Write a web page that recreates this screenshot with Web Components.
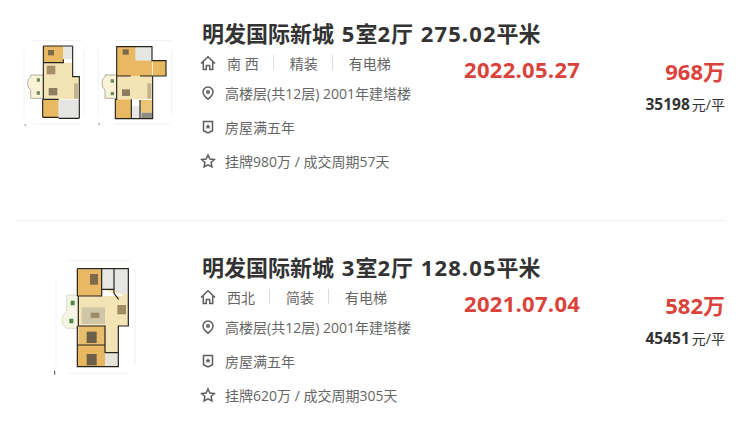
<!DOCTYPE html>
<html lang="zh">
<head>
<meta charset="utf-8">
<title>成交记录</title>
<style>
  html, body { margin: 0; background: #fff; }
  body { font-family: "Open Sans", "Noto Sans CJK SC", sans-serif; overflow: hidden; height: 443px; }
  .n { letter-spacing: 1.1px; }
</style>
</head>
<body>
<template id="row-tpl">
  <style>
    :host { display: flex; align-items: center; height: 34px; font-size: 14px; color: #666; }
    :host([icon="house"]) { height: 27px; }
    .icon { width: 16px; height: 16px; margin: 0 9px 0 -2px; flex: none; display: flex; }
    svg { width: 16px; height: 16px; fill: none; stroke: #5c5c5c; stroke-width: 1.5; }
  </style>
  <span class="icon"><svg viewBox="0 0 16 16"></svg></span>
  <slot></slot>
</template>

<template id="deal-tpl">
  <style>
    :host {
      display: grid;
      grid-template-columns: 187px 262px 145px 1fr;
      grid-template-rows: 34px auto;
      height: 221px;
      box-sizing: border-box;
      margin: 0 18px 13px 15px;
      padding-top: 16px;
      border-bottom: 1px solid #eee;
      color: #333;
    }
    :host(:last-of-type) { border-bottom: 0; height: 209px; margin-bottom: 0; }
    .plan { grid-row: 1 / 3; margin-left: -15px; }
    h2 { grid-column: 2 / 5; margin: 0; font-size: 22px; line-height: 34px; font-weight: 700; color: #333; white-space: nowrap; word-spacing: 2px; }
    .info { margin-top: -1px; }
    .date { margin-top: 4px; font-size: 22px; line-height: 30px; font-weight: 700; color: #d9433b; letter-spacing: .3px; white-space: nowrap; }
    .price { margin-top: 6px; text-align: right; }
    .total { font-size: 22px; line-height: 30px; font-weight: 700; color: #d9433b; }
    .unit { font-size: 14px; line-height: 20px; margin-top: 8px; color: #333; white-space: nowrap; }
  </style>
  <div class="plan"><slot name="plan"></slot></div>
  <h2><slot name="title"></slot></h2>
  <div class="info"><slot name="rows"></slot></div>
  <div class="date"><slot name="date"></slot></div>
  <div class="price">
    <div class="total"><slot name="total"></slot></div>
    <div class="unit"><slot name="unit"></slot></div>
  </div>
</template>

<template id="tags-tpl">
  <style>
    :host { display: flex; align-items: center; padding-left: 2px; }
    ::slotted(span) { display: flex; align-items: center; }
    ::slotted(span:not(:last-child))::after { content: ""; width: 1px; height: 15px; background: #ddd; margin: 0 16px 0 14px; }
  </style>
  <slot></slot>
</template>

<template id="num-tpl">
  <style>
    :host { font-size: 15.500px; font-weight: 700; margin-right: -2px; }
  </style>
  <slot></slot>
</template>

<deal-item>
  <svg slot="plan" width="190" height="120" viewBox="0 0 570 360" style="display:block;margin-top:4px">
    <defs><filter id="soft"><feGaussianBlur stdDeviation="2"/></filter></defs>
    <g filter="url(#soft)">
      <g stroke="#dfe3e8" stroke-width="1.5" fill="none">
        <path d="M100 62H245M72 90V290M252 90V290M100 312H245"/>
        <path d="M345 62H515M295 90V290M515 90V290M345 312H510"/>
      </g>
      <path d="M92 170a26 26 0 0 0 0 40v25h38v-70h-38z" fill="#fbf3d8" stroke="#8a8a7a" stroke-width="2"/>
      <path d="M130 128h88v42h20v68h-108z" fill="#f3e4b6"/>
      <path d="M130 78h60v50h-60z" fill="#e8b862"/>
      <path d="M190 78h28v40h-28z" fill="#e6e6e4"/>
      <path d="M128 238h48v54h-48z" fill="#e8b862"/>
      <path d="M176 240h62v54h-62z" fill="#e4e4e2"/>
      <path d="M144 90h18v16h-18z" fill="#7b6a4a"/>
      <path d="M140 137h26v26h-26z" fill="#a48f68"/>
      <path d="M146 204h26v22h-26z" fill="#8f7d5d"/>
      <path d="M222 190h12v46h-12z" fill="#c2b48e"/>
      <path d="M110 175h10v10h-10zM110 214h10v10h-10z" fill="#6f8f5a"/>
      <path d="M130 78h60M190 78h28M218 78v92h20v125M238 295h-62M128 292h48M128 292v-54M130 238v-110M130 128v-50M130 128h60l0-10M176 238h-46" fill="none" stroke="#26241f" stroke-width="3.4"/>

      <path d="M315 170a26 26 0 0 0 0 40v25h35v-70h-35z" fill="#fbf3d8" stroke="#8a8a7a" stroke-width="2"/>
      <path d="M350 168h108v70h-108z" fill="#f3e4b6"/>
      <path d="M350 80h106v88h-106z" fill="#e8b862"/>
      <path d="M406 80h50v42h-50z" fill="#e6e6e4"/>
      <path d="M458 122h40v46h-40z" fill="#e8b862"/>
      <path d="M346 238h48v58h-48z" fill="#e8b862"/>
      <path d="M394 258h26v38h-26z" fill="#e8e8e6"/>
      <path d="M420 240h38v38h-38z" fill="#ebc67a"/>
      <path d="M424 278h34v18h-34z" fill="#8d8a80"/>
      <path d="M368 88h18v16h-18z" fill="#7b6a4a"/>
      <path d="M366 208h24v20h-24z" fill="#8f7d5d"/>
      <path d="M442 190h12v46h-12z" fill="#c2b48e"/>
      <path d="M332 178h10v10h-10zM332 216h10v10h-10z" fill="#6f8f5a"/>
      <path d="M350 80h106v42h42v46h-40v128h-112v-58h4v-70zM350 168h42M420 168h38M394 238v58M420 240v56" fill="none" stroke="#26241f" stroke-width="3.4"/>
      <path d="M74 312l4 6M297 308v8" stroke="#555" stroke-width="2"/>
    </g>
  </svg>
  <span slot="title">明发国际新城 <span class="n">5</span>室<span class="n">2</span>厅 <span class="n">275.02</span>平米</span>
  <div slot="rows">
    <deal-row icon="house"><deal-tags><span>南 西</span><span>精装</span><span>有电梯</span></deal-tags></deal-row>
    <deal-row icon="pin">高楼层(共12层) 2001年建塔楼</deal-row>
    <deal-row icon="shield">房屋满五年</deal-row>
    <deal-row icon="star">挂牌980万 / 成交周期57天</deal-row>
  </div>
  <span slot="date">2022.05.27</span>
  <span slot="total">968万</span>
  <span slot="unit"><deal-num>35198</deal-num>元/平</span>
</deal-item>

<deal-item>
  <svg slot="plan" width="187" height="135" viewBox="0 0 561 405" style="display:block">
    <defs><filter id="soft2"><feGaussianBlur stdDeviation="1.800"/></filter></defs>
    <g transform="translate(120 0)" filter="url(#soft2)">
      <g stroke="#dfe3e8" stroke-width="1.5" fill="none">
        <path d="M85 32H270M48 95V345M285 55V345M85 370H270"/>
      </g>
      <path d="M80 135h35v100h-35c-10-8-14-16-14-26s8-18 14-24z" fill="#f4f5e2" stroke="#b8b8a8" stroke-width="1.5"/>
      <path d="M115 138h150v90h-30v80h-40v-80h-80z" fill="#f3e4b6"/>
      <path d="M185 58h37v60h-37z" fill="#e8e8e6"/>
      <path d="M222 58h43v72h-43z" fill="#e6e6e4"/>
      <path d="M185 118h37l43 30v-18h-43z" fill="#f3e4b6"/>
      <path d="M112 58h73v80h-73z" fill="#e8b862"/>
      <path d="M115 228h80v57h-80z" fill="#e8bd6c"/>
      <path d="M112 285h83v65h-83z" fill="#e8b862"/>
      <path d="M195 308h40v42h-40z" fill="#e6e4da"/>
      <path d="M150 72h24v32h-24z" fill="#7b6a4a"/>
      <path d="M125 172h70v50h-70z" fill="#cfc6a8"/>
      <path d="M152 188h26v16h-26z" fill="#9c8b66"/>
      <path d="M232 165h26v28h-26z" fill="#a08c62"/>
      <path d="M140 245h30v34h-30z" fill="#6d5f49"/>
      <path d="M140 312h30v34h-30z" fill="#6d5f49"/>
      <path d="M92 152h12v14h-12zM88 206h12v14h-12z" fill="#4d8a45"/>
      <path d="M112 56h153v172h-30v122h-123v-122M112 56v82M112 138h73v-80M115 138v90M115 228h80v80M112 285h83M195 308h40M222 58v72l14 18M185 118h37" fill="none" stroke="#26241f" stroke-width="3.6"/>
      <path d="M44 362v12" stroke="#444" stroke-width="3"/>
    </g>
  </svg>
  <span slot="title">明发国际新城 <span class="n">3</span>室<span class="n">2</span>厅 <span class="n">128.05</span>平米</span>
  <div slot="rows">
    <deal-row icon="house"><deal-tags><span>西北</span><span>简装</span><span>有电梯</span></deal-tags></deal-row>
    <deal-row icon="pin">高楼层(共12层) 2001年建塔楼</deal-row>
    <deal-row icon="shield">房屋满五年</deal-row>
    <deal-row icon="star">挂牌620万 / 成交周期305天</deal-row>
  </div>
  <span slot="date">2021.07.04</span>
  <span slot="total">582万</span>
  <span slot="unit"><deal-num>45451</deal-num>元/平</span>
</deal-item>

<script>
const ICONS = {
  house: '<path d="M1 8.500 8 1.800l7 6.700M3.300 7V14.500h3v-4h3.400v4h3V7"/>',
  pin: '<path d="M8 2a5 5 0 0 1 5 5c0 3.200-3 5.500-5 7.200C6 12.500 3 10.200 3 7a5 5 0 0 1 5-5z"/><circle cx="8" cy="7" r="1.300"/>',
  shield: '<path d="M3.500 2.500h9v9.200L8 14l-4.500-2.300z"/><path d="m8 5 .8 1.700 1.800.2-1.300 1.200.4 1.800L8 9l-1.700.9.400-1.800L5.400 6.900l1.800-.2z" fill="#5c5c5c" stroke="none"/>',
  star: '<path d="m8 2 1.900 4 4.400.5-3.200 3 .8 4.400L8 11.800l-3.900 2.100.8-4.400-3.200-3 4.400-.5z"/>'
};

class DealItem extends HTMLElement {
  constructor() {
    super();
    this.attachShadow({ mode: 'open' });
    this.shadowRoot.appendChild(document.getElementById('deal-tpl').content.cloneNode(true));
  }
}

class DealRow extends HTMLElement {
  constructor() {
    super();
    this.attachShadow({ mode: 'open' });
    this.shadowRoot.appendChild(document.getElementById('row-tpl').content.cloneNode(true));
  }
  connectedCallback() {
    this.shadowRoot.querySelector('svg').innerHTML = ICONS[this.getAttribute('icon')] || '';
  }
}

class DealTags extends HTMLElement {
  constructor() {
    super();
    this.attachShadow({ mode: 'open' });
    this.shadowRoot.appendChild(document.getElementById('tags-tpl').content.cloneNode(true));
  }
}

class DealNum extends HTMLElement {
  constructor() {
    super();
    this.attachShadow({ mode: 'open' });
    this.shadowRoot.appendChild(document.getElementById('num-tpl').content.cloneNode(true));
  }
}

customElements.define('deal-item', DealItem);
customElements.define('deal-row', DealRow);
customElements.define('deal-tags', DealTags);
customElements.define('deal-num', DealNum);
</script>
</body>
</html>
